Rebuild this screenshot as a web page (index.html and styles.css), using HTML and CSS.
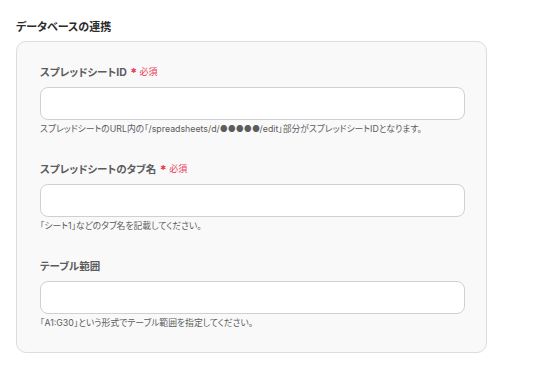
FILE: index.html
```html
<!DOCTYPE html>
<html lang="ja">
<head>
  <meta charset="UTF-8" />
  <meta name="viewport" content="width=device-width, initial-scale=1.0"/>
  <title>データベースの連携</title>
  <link rel="stylesheet" href="styles.css">
</head>
<body>

<h2 class="section-title">データベースの連携</h2>

<div class="form-card">
  <div class="field">
    <label class="field-label">スプレッドシートID <span class="required"><span class="star">✱</span>必須</span></label>
    <input class="field-input" type="text">
    <p class="field-help">スプレッドシートのURL内の「/spreadsheets/d/●●●●●/edit」部分がスプレッドシートIDとなります。</p>
  </div>

  <div class="field">
    <label class="field-label">スプレッドシートのタブ名 <span class="required"><span class="star">✱</span>必須</span></label>
    <input class="field-input" type="text">
    <p class="field-help">「シート1」などのタブ名を記載してください。</p>
  </div>

  <div class="field">
    <label class="field-label">テーブル範囲</label>
    <input class="field-input" type="text">
    <p class="field-help">「A1:G30」という形式でテーブル範囲を指定してください。</p>
  </div>
</div>

</body>
</html>
```

FILE: styles.css
```css
body {
  margin: 0;
  padding: 20px 16px;
  font-family: Inter, "Noto Sans CJK JP", sans-serif;
  font-feature-settings: "palt";
  background: #fff;
  color: #333;
}

.section-title {
  margin: 0 0 7px;
  font-size: 11px;
  font-weight: bold;
  line-height: 14px;
  color: #2b2b2b;
}

.form-card {
  width: 425px;
  padding: 21px 21px 23px 23px;
  background-color: #f9f9fa;
  border: 1px solid #dcdde1;
  border-radius: 10px;
}

.field {
  margin-bottom: 25px;
}

.field:last-child {
  margin-bottom: 0;
}

.field-label {
  display: flex;
  align-items: center;
  gap: 4px;
  height: 16px;
  font-size: 10.5px;
  font-weight: bold;
  color: #5c5c5c;
  margin-bottom: 8px;
}

.required {
  display: flex;
  align-items: center;
  font-size: 9px;
  font-weight: normal;
  color: #ec3c55;
}

.star {
  font-family: "DejaVu Sans", sans-serif;
  font-size: 7px;
  margin-right: 3px;
}

.field-input {
  display: block;
  box-sizing: border-box;
  width: 100%;
  height: 33px;
  margin: 0;
  padding: 0 10px;
  background: #fff;
  border: 1px solid #cfd0d5;
  border-radius: 8px;
  outline: none;
}

.field-help {
  margin: 3px 0 0;
  font-size: 8.8px;
  line-height: 12px;
  color: #5c5c5c;
}
```
